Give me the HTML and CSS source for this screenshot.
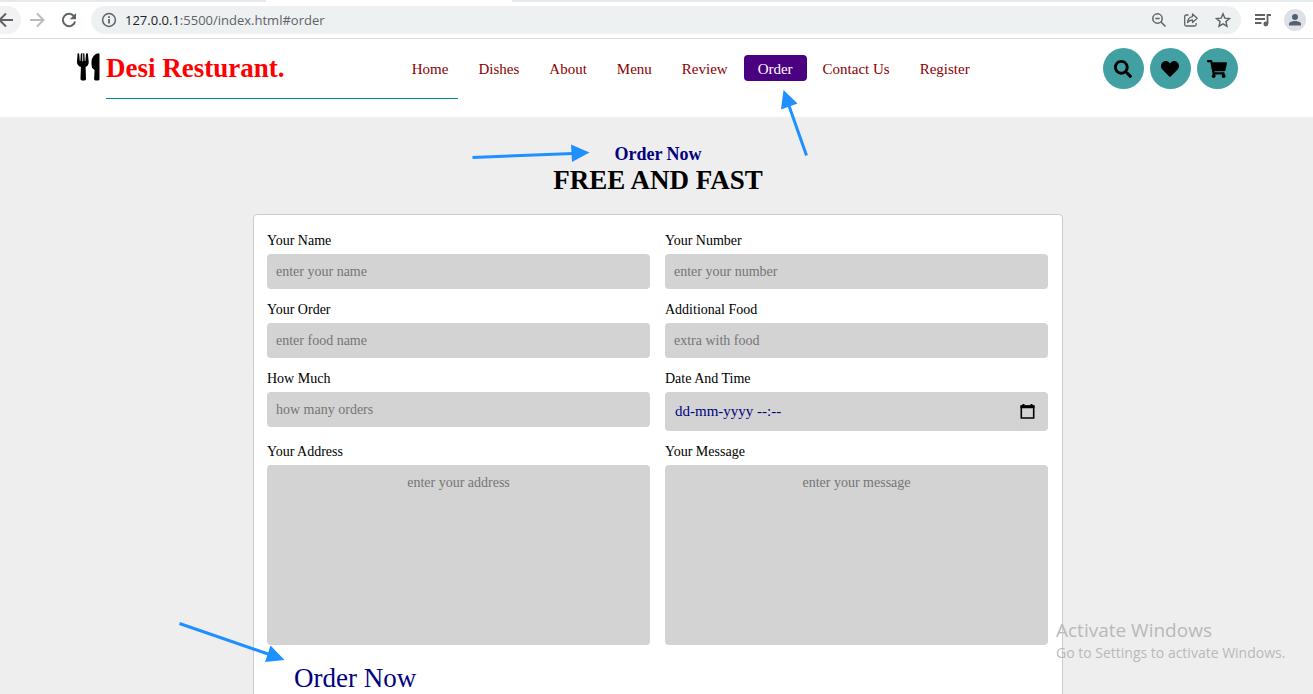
FILE: index.html
```
<!DOCTYPE html>
<html lang="en">
<head>
<meta charset="utf-8">
<title>Desi Resturant</title>
<link rel="stylesheet" href="styles.css">
</head>
<body>
<div class="browser">
  <div class="tab-strip"><span class="tab-active"></span></div>
  <div class="toolbar">
    <button class="tool tool-back" aria-label="Back"><svg width="16" height="16" viewBox="0 0 16 16"><path d="M15 8H2M8 1.5 1.5 8 8 14.5" fill="none" stroke="#5f6368" stroke-width="2"/></svg></button>
    <button class="tool" aria-label="Forward"><svg width="16" height="16" viewBox="0 0 16 16"><path d="M1 8h13M8 1.5 14.500 8 8 14.500" fill="none" stroke="#babcbe" stroke-width="2"/></svg></button>
    <button class="tool" aria-label="Reload"><svg width="16" height="16" viewBox="0 0 16 16"><path d="M13.200 4.400A6.200 6.200 0 1 0 14.100 9.500" fill="none" stroke="#5f6368" stroke-width="2"/><path d="M15 1v6.200H8.800z" fill="#5f6368"/></svg></button>
    <div class="omnibox">
      <svg width="16" height="16" viewBox="0 0 16 16"><circle cx="8" cy="8" r="6.400" fill="none" stroke="#5f6368" stroke-width="1.500"/><path d="M7.100 7h1.800v4.500H7.100zM7.100 4.200h1.800v1.700H7.100z" fill="#5f6368"/></svg>
      <span class="url"><span class="host">127.0.0.1</span>:5500/index.html#order</span>
      <button class="page-action" aria-label="Zoom"><svg width="16" height="16" viewBox="0 0 16 16"><g fill="none" stroke="#5f6368" stroke-width="1.500"><circle cx="6.500" cy="6.500" r="4.700"/><path d="m10 10 4.500 4.500M4.300 6.500h4.400"/></g></svg></button>
      <button class="page-action" aria-label="Share"><svg width="16" height="16" viewBox="0 0 16 16"><g fill="none" stroke="#5f6368" stroke-width="1.300"><path d="M5.500 3H3.200Q1.700 3 1.700 4.500v8Q1.700 14 3.200 14h8.500q1.500 0 1.500-1.500V11"/><path d="M9.500 2v2.600C6.500 5 4.800 7 4.500 10.500 6 8.700 7.500 8 9.500 8v2.500l4.700-4.200z" stroke-linejoin="round"/></g></svg></button>
      <button class="page-action" aria-label="Bookmark"><svg width="16" height="16" viewBox="0 0 16 16"><path d="m8 1.800 1.800 4.300 4.700.4-3.600 3.100 1.100 4.600L8 11.800l-4 2.400 1.100-4.600-3.600-3.100 4.700-.4z" fill="none" stroke="#5f6368" stroke-width="1.400"/></svg></button>
    </div>
    <button class="tool" aria-label="Media"><svg width="16" height="16" viewBox="0 0 16 16"><path d="M0 3h10M0 7h10M0 11h6.500M12.500 12V3H16" fill="none" stroke="#5f6368" stroke-width="1.800"/><circle cx="10.800" cy="12" r="2.400" fill="#5f6368"/></svg></button>
    <button class="profile" aria-label="Profile"><svg width="22" height="22" viewBox="0 0 22 22"><circle cx="11" cy="8" r="3" fill="#526070"/><path d="M5 16.500V15c0-2 3-3 6-3s6 1 6 3v1.500z" fill="#526070"/></svg></button>
  </div>
</div>

<header class="site-header">
  <a class="logo" href="#home">
    <svg width="23" height="28" viewBox="0 0 23 28"><path d="M0.500 1Q.7.300 1.400.300T2.200 1L2.800 8H3.400L3.800 1Q4 .300 4.700.300H6.600Q7.200.300 7.400 1L7.800 8H8.400L9 1Q9.100.300 9.900.300T10.900 1L11.700 9Q11.700 12.700 8.600 14L9 26Q9 27.400 7.700 27.400H5Q3.500 27.400 3.500 26L3.900 14Q0 12.700 0 9z"/><path d="M5.300.300h.9v8h-.9z" fill="#fff"/><path d="M22.500 1.500V26q0 1.400-1.400 1.400h-2.600q-1.400 0-1.400-1.400l.5-9-2.500-2Q13.200 7.500 16.400 3.300 18.600.300 21.300.300 22.500.300 22.500 1.500z"/></svg>
    <span class="logo-text">Desi Resturant.</span>
  </a>
  <nav class="nav">
    <a href="#home">Home</a>
    <a href="#dishes">Dishes</a>
    <a href="#about">About</a>
    <a href="#menu">Menu</a>
    <a href="#review">Review</a>
    <a class="active" href="#order">Order</a>
    <a href="#contact">Contact Us</a>
    <a href="#register">Register</a>
  </nav>
  <div class="icons">
    <button aria-label="Search"><svg width="18" height="18" viewBox="0 0 512 512"><path d="M505 442.700 405.300 343c-4.500-4.500-10.600-7-17-7H372c27.600-35.300 44-79.700 44-128C416 93.100 322.900 0 208 0S0 93.100 0 208s93.100 208 208 208c48.300 0 92.700-16.400 128-44v16.300c0 6.400 2.500 12.500 7 17l99.700 99.700c9.400 9.400 24.600 9.400 33.900 0l28.300-28.300c9.400-9.400 9.400-24.600.1-34zM208 336c-70.700 0-128-57.200-128-128 0-70.700 57.200-128 128-128 70.700 0 128 57.200 128 128 0 70.700-57.200 128-128 128z"/></svg></button>
    <button aria-label="Favourites"><svg width="18" height="18" viewBox="0 0 512 512"><path d="M462.300 62.600C407.500 15.900 326 24.300 275.700 76.200L256 96.500l-19.700-20.300C186.100 24.300 104.500 15.900 49.700 62.600c-62.800 53.600-66.100 149.800-9.900 207.900l193.500 199.800c12.500 12.900 32.800 12.900 45.300 0l193.500-199.800c56.300-58.100 53-154.300-9.800-207.900z"/></svg></button>
    <button aria-label="Cart"><svg width="20" height="18" viewBox="0 0 576 512"><path d="m528.100 301.300 47.300-208C578.800 78.300 567.400 64 552 64H159.200l-9.200-44.800C147.800 8 137.900 0 126.500 0H24C10.700 0 0 10.700 0 24v16c0 13.300 10.700 24 24 24h69.900l70.200 343.400C147.300 417.100 136 435.200 136 456c0 30.900 25.100 56 56 56s56-25.100 56-56c0-15.700-6.400-29.800-16.800-40h209.600C430.400 426.200 424 440.300 424 456c0 30.900 25.100 56 56 56s56-25.100 56-56c0-22.200-12.900-41.300-31.600-50.400l5.500-24.300c3.400-15-8-29.300-23.400-29.300H218.100l-6.500-32h293.100c11.200 0 20.900-7.800 23.400-18.700z"/></svg></button>
  </div>
</header>

<main class="order" id="order">
  <h3 class="sub-heading">Order Now</h3>
  <h1 class="heading">FREE AND FAST</h1>
  <form class="order-form">
    <div class="fields">
      <div class="field"><label for="name">Your Name</label><input id="name" type="text" placeholder="enter your name"></div>
      <div class="field"><label for="number">Your Number</label><input id="number" type="text" placeholder="enter your number"></div>
      <div class="field"><label for="food">Your Order</label><input id="food" type="text" placeholder="enter food name"></div>
      <div class="field"><label for="extra">Additional Food</label><input id="extra" type="text" placeholder="extra with food"></div>
      <div class="field"><label for="amount">How Much</label><input id="amount" type="text" placeholder="how many orders"></div>
      <div class="field"><label for="date">Date And Time</label>
        <div class="date-box"><input id="date" type="text" placeholder="dd-mm-yyyy --:--"><button type="button" aria-label="Pick a date"><svg width="15" height="15" viewBox="0 0 15 15"><path d="M1.300 2h12.400v12H1.300z" fill="none" stroke="#000" stroke-width="1.600"/><path d="M.500 1.500h14v2.800H.500zM2.500 0h2v2h-2zM10.500 0h2v2h-2z"/></svg></button></div>
      </div>
      <div class="field"><label for="address">Your Address</label><textarea id="address" placeholder="enter your address"></textarea></div>
      <div class="field"><label for="message">Your Message</label><textarea id="message" placeholder="enter your message"></textarea></div>
    </div>
    <button class="submit" type="submit">Order Now</button>
  </form>
</main>

<svg class="arrows" width="1313" height="694" viewBox="0 0 1313 694" aria-hidden="true">
  <g fill="#1e90ff" stroke="#1e90ff">
    <path d="M472.500 157.500 573 153.500M806.500 155.500 788 103M179.500 623.500 268 654" fill="none" stroke-width="3"/>
    <path d="M571 144.500 589.500 152.500 572 162zM783.500 90 797.500 103.500 781 109.500zM270.500 645.500 284.500 660 265 662z" stroke="none"/>
  </g>
</svg>
<div class="watermark"><p class="watermark-title">Activate Windows</p><p class="watermark-text">Go to Settings to activate Windows.</p></div>
</body>
</html>
```
FILE: styles.css
```
* { box-sizing: border-box; margin: 0; padding: 0; }

body {
  display: flex;
  flex-direction: column;
  height: 100vh;
  overflow: hidden;
  position: relative;
  background: #fff;
  font-family: "Liberation Serif", "Times New Roman", serif;
}

button { border: 0; background: none; font-family: inherit; cursor: pointer; }
a { text-decoration: none; }
svg { display: block; flex: none; }

/* Browser bar */
.browser { flex: none; border-bottom: 1px solid #d9dadb; }
.tab-strip { height: 2px; padding-left: 266px; background: #e5eaed; }
.tab-active { display: block; width: 246px; height: 2px; background: #fff; }
.toolbar { display: flex; align-items: center; height: 36px; padding-right: 7px; }
.tool { display: flex; align-items: center; justify-content: center; width: 32px; height: 28px; }
.tool-back { width: 21px; border-radius: 0 14px 14px 0; background: #f2f2f2; padding-right: 7px; justify-content: flex-end; }
.omnibox {
  display: flex; align-items: center; flex: 1;
  height: 28px; margin: 0 6px; padding: 0 10px;
  border-radius: 14px; background: #edf1f2;
}
.url { flex: 1; padding-left: 8px; font: 13px/20px "Open Sans", "Noto Sans", sans-serif; color: #5f6368; }
.host { color: #202124; }
.page-action { margin-left: 16px; }
.profile { margin-left: 5px; border-radius: 50%; background: #dde1e6; }

/* Site header */
.site-header {
  display: flex; flex: none; justify-content: space-between;
  height: 78px; padding: 9px 75px 0 77px;
}
.logo { display: flex; align-items: center; height: 40px; gap: 6px; }
.logo svg { margin-bottom: 2px; }
.logo-text { position: relative; color: #f00; font-size: 27px; font-weight: bold; line-height: 40px; }
.logo-text::after {
  content: ""; position: absolute; left: 0; top: 50px;
  width: 352px; height: 1px; background: #008b8b;
}
.nav { display: flex; gap: 2px; height: 26px; margin: 7px 6px 0 0; }
.nav a { padding: 0 14px; border-radius: 4px; color: #8b0000; font-size: 15px; line-height: 28px; }
.nav .active { background: #4b0082; color: #fff; }
.icons { display: flex; gap: 6px; }
.icons button {
  display: flex; align-items: center; justify-content: center;
  width: 41px; height: 41px; border-radius: 50%; background: #42a0a2;
}

/* Order section */
.order { flex: 1; min-height: 0; padding: 27px 77px 0 80px; background: #eee; }
.sub-heading { color: #000080; font-size: 18px; line-height: 21px; text-align: center; }
.heading { color: #000; font-size: 27px; line-height: 30px; text-align: center; }
.order-form {
  max-width: 810px; margin: 19px auto 0; padding: 18px 14px 20px 13px;
  border: 1px solid #ccc; border-radius: 4px; background: #fff;
}
.fields { display: grid; grid-template-columns: 1fr 1fr; gap: 13px 15px; align-items: start; }
.field { display: flex; flex-direction: column; gap: 5px; }
.field label { color: #000; font-size: 14px; line-height: 16px; }
.field input, .field textarea {
  width: 100%; border: 0; border-radius: 4px; padding: 0 9px;
  background: #d3d3d3; color: #000080;
  font-family: inherit; font-size: 14px; line-height: 16px;
}
.field input { height: 35px; }
.field textarea { display: block; height: 180px; padding-top: 10px; resize: none; text-align: center; }
.field ::placeholder { color: #757575; opacity: 1; }
.date-box { display: flex; align-items: center; height: 39px; padding-right: 13px; border-radius: 4px; background: #d3d3d3; }
.field .date-box input { flex: 1; padding-left: 10px; font-size: 15px; }
.field .date-box ::placeholder { color: #000080; }
.submit { display: block; margin-top: 18px; padding: 0 27px; color: #000080; font-size: 27px; line-height: 30px; }

/* Overlays */
.arrows { position: absolute; left: 0; top: 0; pointer-events: none; }
.watermark { position: absolute; right: 20px; bottom: 31px; min-width: 237px; color: #b9b9b9; font-family: "Open Sans", "Noto Sans", sans-serif; pointer-events: none; }
.watermark-title { font-size: 19px; line-height: 26px; }
.watermark-text { font-size: 14px; line-height: 20px; }
```
